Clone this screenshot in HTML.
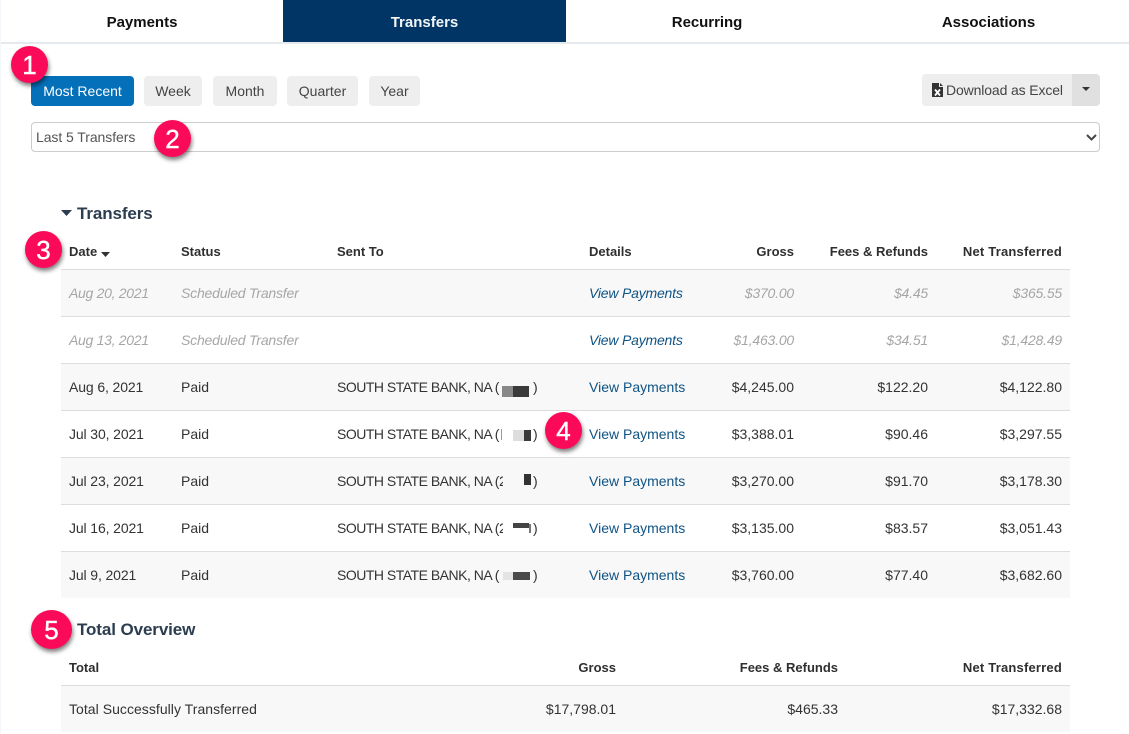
<!DOCTYPE html>
<html><head><meta charset="utf-8"><style>
html,body{margin:0;padding:0;background:#fff}
body{width:1129px;height:734px;position:relative;overflow:hidden;font-family:"Liberation Sans",sans-serif;font-size:14px;color:#333}
.a{position:absolute;white-space:nowrap}
.t{position:absolute;white-space:nowrap;line-height:20px;height:20px}
.tab{top:0;height:42px;line-height:45px;text-align:center;font-size:15px;font-weight:bold;color:#111}
.btn{top:76px;height:30px;line-height:30px;background:#eee;border-radius:4px;text-align:center;color:#444;font-size:14px}
.b{font-weight:bold;color:#2f2f2f;font-size:13px}
.n{letter-spacing:.2px}
.r{text-align:right}
.row{position:absolute;left:61px;width:1009px;height:46px}
.g{background:#f8f8f8}
.ln{position:absolute;left:61px;width:1009px;height:1px;background:#ddd}
.i{font-style:italic;color:#a6a6a6;letter-spacing:-.2px}
.d{letter-spacing:-.12px}
.l{color:#0f5384}
.s{letter-spacing:-.5px;overflow:hidden;width:166px}
.c{position:absolute;width:37px;height:37px;border-radius:50%;background:#fb0a59;color:#fff;font-size:26px;line-height:39px;text-align:center;box-shadow:1px 3px 4px rgba(0,0,0,.5);-webkit-text-stroke:.4px #fff}
.h{font-size:17px;font-weight:bold;color:#2b3d4f;letter-spacing:-.1px}
.bl{position:absolute;height:7px}
</style></head><body>
<div class="a" style="left:0;top:0;width:1px;height:734px;background:#f3f7fb"></div>
<div class="a" style="left:1px;top:42px;width:1128px;height:2px;background:#e4e9ee"></div>
<div class="a tab" style="left:1px;width:282px">Payments</div>
<div class="a tab" style="left:283px;width:283px;background:#013565;color:#f2f5f8">Transfers</div>
<div class="a tab" style="left:566px;width:282px;letter-spacing:-.05px">Recurring</div>
<div class="a tab" style="left:848px;width:281px">Associations</div>

<div class="a btn" style="left:31px;width:103px;background:#0570ba;color:#fff">Most Recent</div>
<div class="a btn" style="left:144px;width:58px">Week</div>
<div class="a btn" style="left:213px;width:64px">Month</div>
<div class="a btn" style="left:287px;width:71px">Quarter</div>
<div class="a btn" style="left:369px;width:51px">Year</div>

<div class="a" style="left:922px;top:74px;width:150px;height:32px;background:#eee;border-radius:4px 0 0 4px"></div>
<div class="a" style="left:1072px;top:74px;width:28px;height:32px;background:#e0e0e0;border-radius:0 4px 4px 0"></div>
<svg class="a" style="left:932px;top:83px" width="11" height="14" viewBox="0 0 11 14"><path d="M0 0H7V4H11V14H0Z" fill="#333"/><path d="M8 0L11 3H8Z" fill="#333"/><path d="M3 6.500L8 12.500M8 6.500L3 12.500" stroke="#fff" stroke-width="1.800"/></svg>
<div class="t" style="left:946px;top:80px;color:#444;letter-spacing:-.13px">Download as Excel</div>
<svg class="a" style="left:1082px;top:87px" width="8" height="5"><path d="M0 0H8L4 4Z" fill="#333"/></svg>

<div class="a" style="left:31px;top:122px;width:1067px;height:28px;border:1px solid #ccc;border-radius:4px"></div>
<div class="t" style="left:36px;top:127px;color:#555;letter-spacing:-.07px">Last 5 Transfers</div>
<svg class="a" style="left:1086px;top:134px" width="11" height="7"><path d="M1 1L5.500 5.500L10 1" fill="none" stroke="#444" stroke-width="2"/></svg>

<svg class="a" style="left:61px;top:210px" width="11" height="6"><path d="M0 0H11L5.500 6Z" fill="#2b3d4f"/></svg>
<div class="t h" style="left:77px;top:204px">Transfers</div>

<div class="t b" style="left:69px;top:242px">Date</div>
<svg class="a" style="left:101px;top:252px" width="9" height="5"><path d="M0 0H9L4.500 5Z" fill="#333"/></svg>
<div class="t b" style="left:181px;top:242px">Status</div>
<div class="t b" style="left:337px;top:242px">Sent To</div>
<div class="t b" style="left:589px;top:242px">Details</div>
<div class="t b r" style="right:335px;top:242px">Gross</div>
<div class="t b r" style="right:201px;top:242px">Fees &amp; Refunds</div>
<div class="t b r n" style="right:67px;top:242px">Net Transferred</div>

<div class="row g" style="top:270px"></div>
<div class="row g" style="top:364px"></div>
<div class="row g" style="top:458px"></div>
<div class="row g" style="top:552px"></div>
<div class="ln" style="top:269px"></div>
<div class="ln" style="top:316px"></div>
<div class="ln" style="top:363px"></div>
<div class="ln" style="top:410px"></div>
<div class="ln" style="top:457px"></div>
<div class="ln" style="top:504px"></div>
<div class="ln" style="top:551px"></div>

<div class="t i" style="left:69px;top:283px;letter-spacing:-.3px">Aug 20, 2021</div>
<div class="t i" style="left:181px;top:283px">Scheduled Transfer</div>
<div class="t l" style="left:589px;top:283px;font-style:italic;letter-spacing:-.2px">View Payments</div>
<div class="t i r" style="right:335px;top:283px">$370.00</div>
<div class="t i r" style="right:201px;top:283px">$4.45</div>
<div class="t i r" style="right:67px;top:283px">$365.55</div>

<div class="t i" style="left:69px;top:330px;letter-spacing:-.3px">Aug 13, 2021</div>
<div class="t i" style="left:181px;top:330px">Scheduled Transfer</div>
<div class="t l" style="left:589px;top:330px;font-style:italic;letter-spacing:-.2px">View Payments</div>
<div class="t i r" style="right:335px;top:330px">$1,463.00</div>
<div class="t i r" style="right:201px;top:330px">$34.51</div>
<div class="t i r" style="right:67px;top:330px">$1,428.49</div>

<div class="t d" style="left:69px;top:377px">Aug 6, 2021</div>
<div class="t" style="left:181px;top:377px">Paid</div>
<div class="t s" style="left:337px;top:377px">SOUTH STATE BANK, NA (</div>
<div class="t" style="left:533px;top:377px">)</div>
<div class="bl" style="left:502px;top:386px;width:11px;height:11px;background:#888"></div>
<div class="bl" style="left:513px;top:386px;width:16px;height:11px;background:#3a3a3a"></div>
<div class="t l" style="left:589px;top:377px">View Payments</div>
<div class="t r" style="right:335px;top:377px">$4,245.00</div>
<div class="t r" style="right:201px;top:377px">$122.20</div>
<div class="t r" style="right:67px;top:377px">$4,122.80</div>

<div class="t d" style="left:69px;top:424px">Jul 30, 2021</div>
<div class="t" style="left:181px;top:424px">Paid</div>
<div class="t s" style="left:337px;top:424px">SOUTH STATE BANK, NA (</div>
<div class="t" style="left:533px;top:424px">)</div>
<div class="bl" style="left:501px;top:429px;width:1px;height:11px;background:#999"></div>
<div class="bl" style="left:513px;top:430px;width:11px;height:11px;background:#ddd"></div>
<div class="bl" style="left:524px;top:430px;width:7px;height:11px;background:#3a3a3a"></div>
<div class="t l" style="left:589px;top:424px">View Payments</div>
<div class="t r" style="right:335px;top:424px">$3,388.01</div>
<div class="t r" style="right:201px;top:424px">$90.46</div>
<div class="t r" style="right:67px;top:424px">$3,297.55</div>

<div class="t d" style="left:69px;top:471px">Jul 23, 2021</div>
<div class="t" style="left:181px;top:471px">Paid</div>
<div class="t s" style="left:337px;top:471px">SOUTH STATE BANK, NA (2</div>
<div class="t" style="left:533px;top:471px">)</div>
<div class="bl" style="left:524px;top:474px;width:7px;height:11px;background:#333"></div>
<div class="t l" style="left:589px;top:471px">View Payments</div>
<div class="t r" style="right:335px;top:471px">$3,270.00</div>
<div class="t r" style="right:201px;top:471px">$91.70</div>
<div class="t r" style="right:67px;top:471px">$3,178.30</div>

<div class="t d" style="left:69px;top:518px">Jul 16, 2021</div>
<div class="t" style="left:181px;top:518px">Paid</div>
<div class="t s" style="left:337px;top:518px">SOUTH STATE BANK, NA (2</div>
<div class="t" style="left:533px;top:518px">)</div>
<div class="bl" style="left:513px;top:523px;width:16px;height:5px;background:#444"></div>
<div class="bl" style="left:529px;top:524px;width:2px;height:9px;background:#777"></div>
<div class="t l" style="left:589px;top:518px">View Payments</div>
<div class="t r" style="right:335px;top:518px">$3,135.00</div>
<div class="t r" style="right:201px;top:518px">$83.57</div>
<div class="t r" style="right:67px;top:518px">$3,051.43</div>

<div class="t d" style="left:69px;top:565px">Jul 9, 2021</div>
<div class="t" style="left:181px;top:565px">Paid</div>
<div class="t s" style="left:337px;top:565px">SOUTH STATE BANK, NA (</div>
<div class="t" style="left:533px;top:565px">)</div>
<div class="bl" style="left:503px;top:572px;width:10px;height:8px;background:#e4e4e4"></div>
<div class="bl" style="left:513px;top:572px;width:17px;height:8px;background:#4a4a4a"></div>
<div class="t l" style="left:589px;top:565px">View Payments</div>
<div class="t r" style="right:335px;top:565px">$3,760.00</div>
<div class="t r" style="right:201px;top:565px">$77.40</div>
<div class="t r" style="right:67px;top:565px">$3,682.60</div>

<div class="t h" style="left:77px;top:620px">Total Overview</div>
<div class="t b" style="left:69px;top:658px">Total</div>
<div class="t b r" style="right:513px;top:658px">Gross</div>
<div class="t b r" style="right:291px;top:658px">Fees &amp; Refunds</div>
<div class="t b r n" style="right:67px;top:658px">Net Transferred</div>
<div class="ln" style="top:685px"></div>
<div class="row g" style="top:686px"></div>
<div class="t" style="left:69px;top:699px;letter-spacing:.04px">Total Successfully Transferred</div>
<div class="t r" style="right:513px;top:699px">$17,798.01</div>
<div class="t r" style="right:291px;top:699px">$465.33</div>
<div class="t r" style="right:67px;top:699px">$17,332.68</div>

<div class="c" style="left:11px;top:46px">1</div>
<div class="c" style="left:154px;top:120px">2</div>
<div class="c" style="left:25px;top:231px">3</div>
<div class="c" style="left:545px;top:412px">4</div>
<div class="c" style="left:31px;top:610px;width:41px;height:39px;line-height:41px">5</div>
</body></html>
